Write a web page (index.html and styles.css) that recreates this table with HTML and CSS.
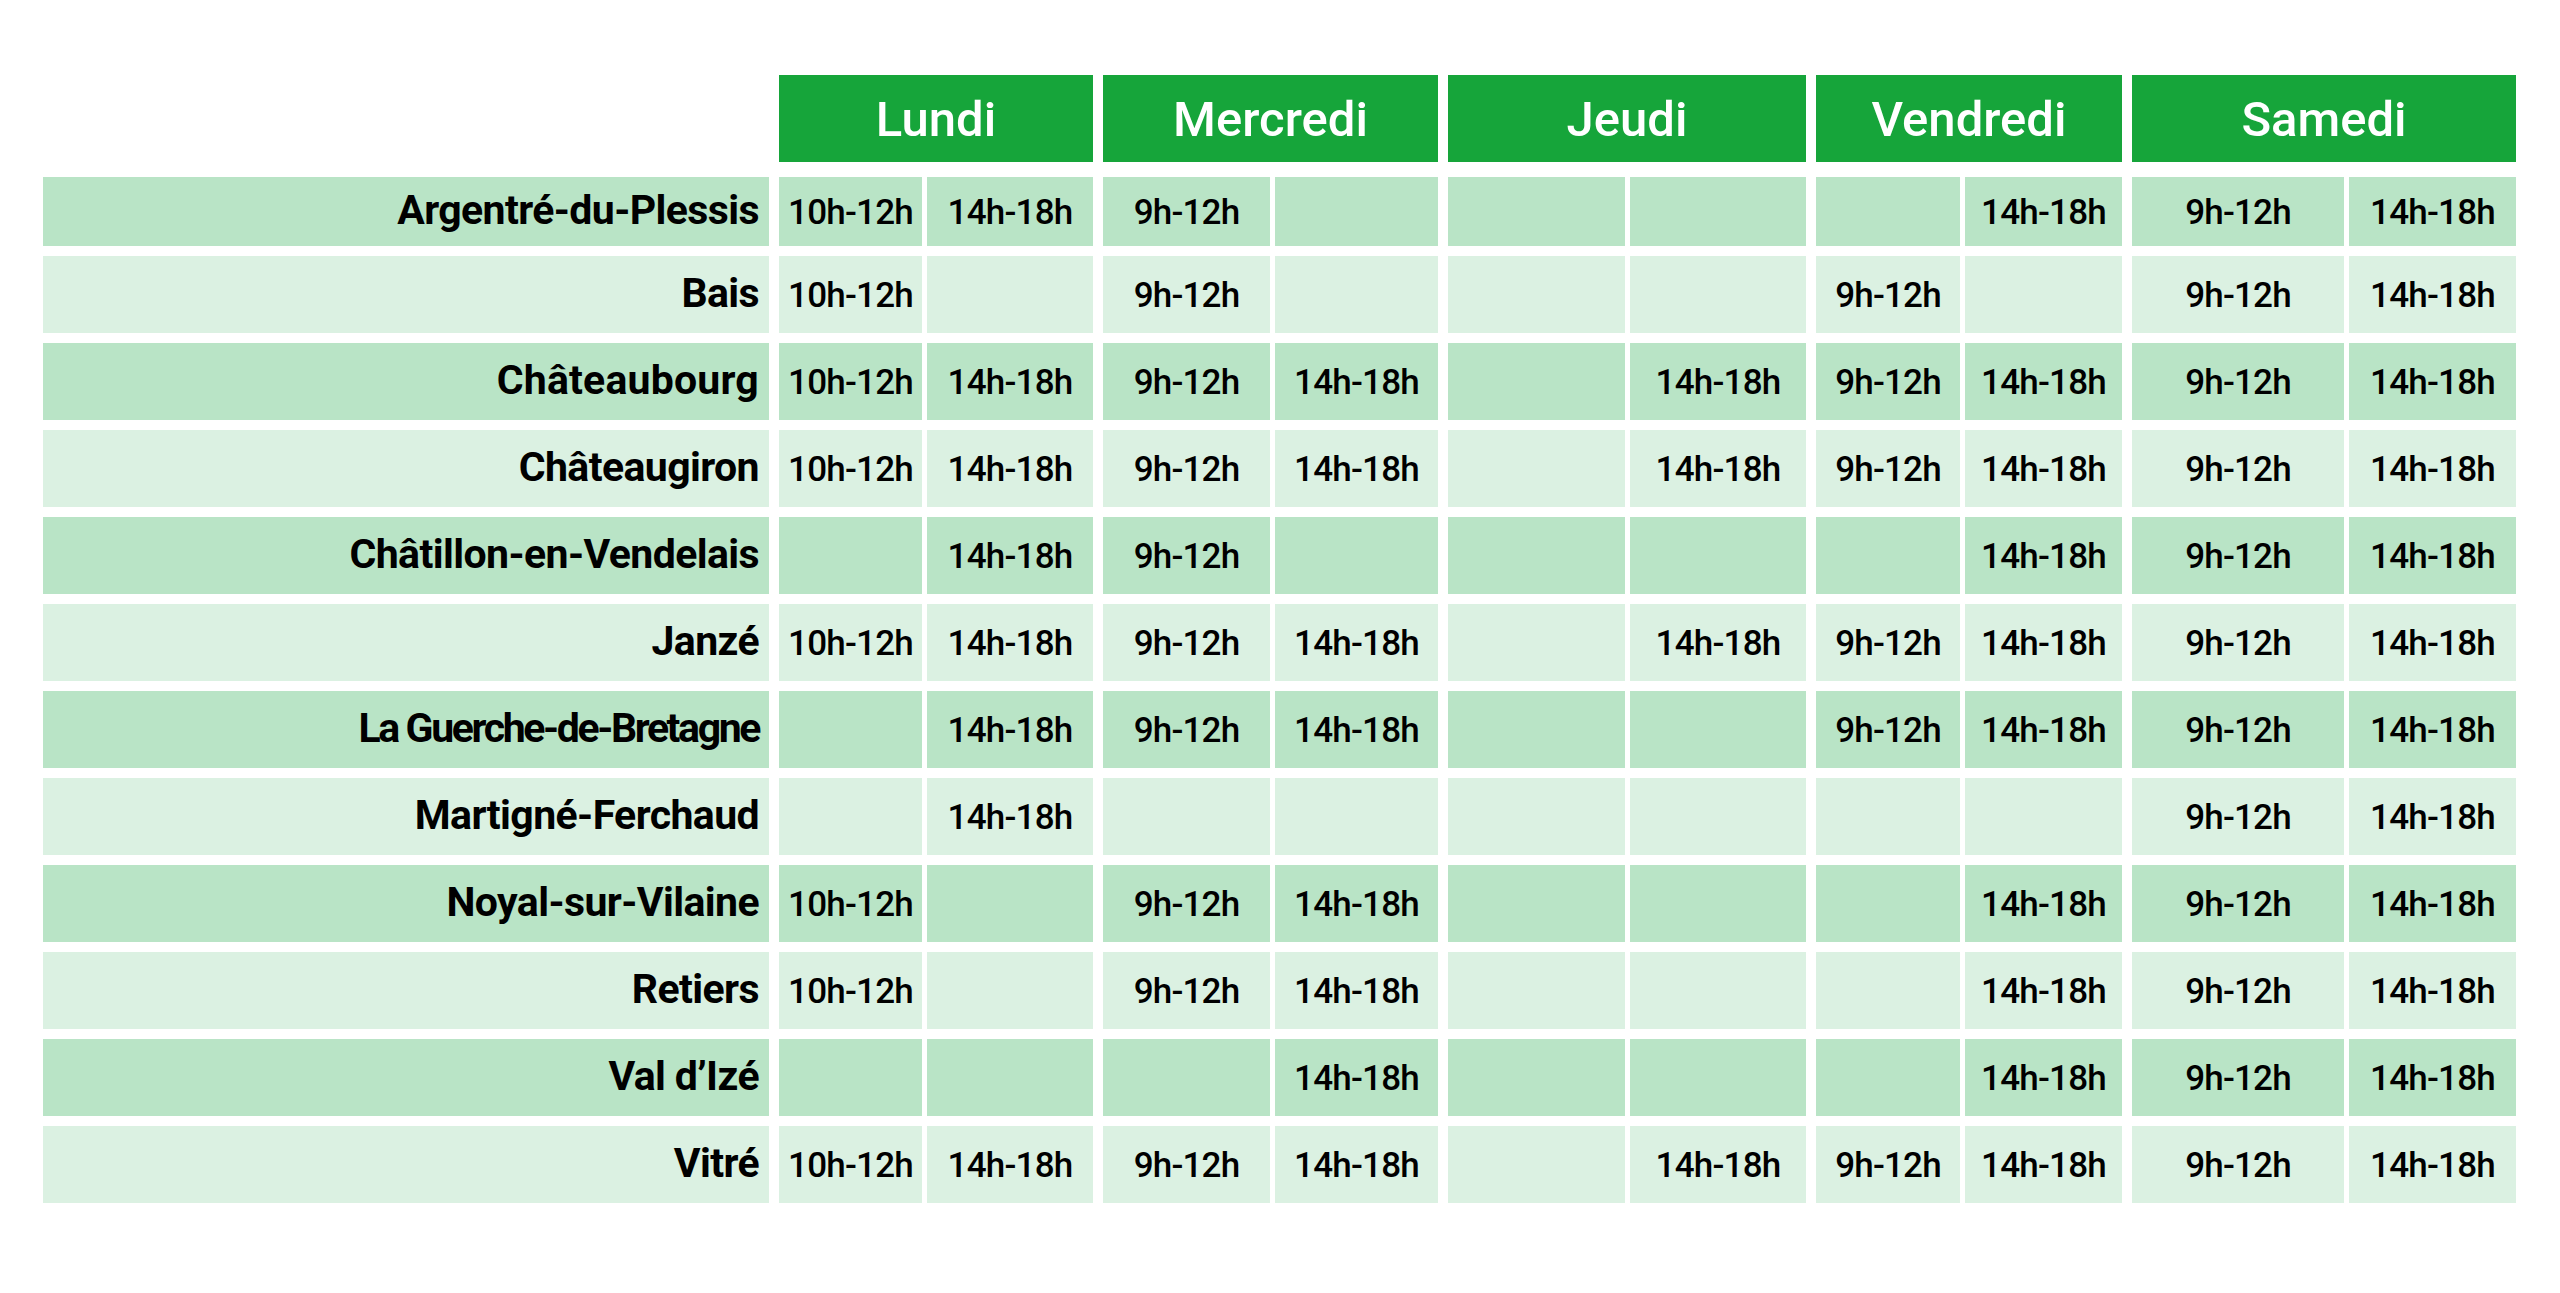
FILE: index.html
```html
<!DOCTYPE html>
<html lang="fr">
<head>
<meta charset="utf-8">
<title>Horaires</title>
<link rel="stylesheet" href="styles.css">
</head>
<body>
<div class="page">
  <div class="table">
    <div class="head-row">
      <div class="name-spacer"></div>
      <div class="day day-lun">Lundi</div>
      <div class="day day-mer">Mercredi</div>
      <div class="day day-jeu">Jeudi</div>
      <div class="day day-ven">Vendredi</div>
      <div class="day day-sam">Samedi</div>
    </div>

    <div class="row dark first">
      <div class="name">Argentré-du-Plessis</div>
      <div class="grp g-lun"><div class="c a">10h-12h</div><div class="c b">14h-18h</div></div>
      <div class="grp g-mer"><div class="c a">9h-12h</div><div class="c b"></div></div>
      <div class="grp g-jeu"><div class="c a"></div><div class="c b"></div></div>
      <div class="grp g-ven"><div class="c a"></div><div class="c b">14h-18h</div></div>
      <div class="grp g-sam"><div class="c a">9h-12h</div><div class="c b">14h-18h</div></div>
    </div>

    <div class="row light">
      <div class="name">Bais</div>
      <div class="grp g-lun"><div class="c a">10h-12h</div><div class="c b"></div></div>
      <div class="grp g-mer"><div class="c a">9h-12h</div><div class="c b"></div></div>
      <div class="grp g-jeu"><div class="c a"></div><div class="c b"></div></div>
      <div class="grp g-ven"><div class="c a">9h-12h</div><div class="c b"></div></div>
      <div class="grp g-sam"><div class="c a">9h-12h</div><div class="c b">14h-18h</div></div>
    </div>

    <div class="row dark">
      <div class="name wide">Châteaubourg</div>
      <div class="grp g-lun"><div class="c a">10h-12h</div><div class="c b">14h-18h</div></div>
      <div class="grp g-mer"><div class="c a">9h-12h</div><div class="c b">14h-18h</div></div>
      <div class="grp g-jeu"><div class="c a"></div><div class="c b">14h-18h</div></div>
      <div class="grp g-ven"><div class="c a">9h-12h</div><div class="c b">14h-18h</div></div>
      <div class="grp g-sam"><div class="c a">9h-12h</div><div class="c b">14h-18h</div></div>
    </div>

    <div class="row light">
      <div class="name">Châteaugiron</div>
      <div class="grp g-lun"><div class="c a">10h-12h</div><div class="c b">14h-18h</div></div>
      <div class="grp g-mer"><div class="c a">9h-12h</div><div class="c b">14h-18h</div></div>
      <div class="grp g-jeu"><div class="c a"></div><div class="c b">14h-18h</div></div>
      <div class="grp g-ven"><div class="c a">9h-12h</div><div class="c b">14h-18h</div></div>
      <div class="grp g-sam"><div class="c a">9h-12h</div><div class="c b">14h-18h</div></div>
    </div>

    <div class="row dark">
      <div class="name">Châtillon-en-Vendelais</div>
      <div class="grp g-lun"><div class="c a"></div><div class="c b">14h-18h</div></div>
      <div class="grp g-mer"><div class="c a">9h-12h</div><div class="c b"></div></div>
      <div class="grp g-jeu"><div class="c a"></div><div class="c b"></div></div>
      <div class="grp g-ven"><div class="c a"></div><div class="c b">14h-18h</div></div>
      <div class="grp g-sam"><div class="c a">9h-12h</div><div class="c b">14h-18h</div></div>
    </div>

    <div class="row light">
      <div class="name">Janzé</div>
      <div class="grp g-lun"><div class="c a">10h-12h</div><div class="c b">14h-18h</div></div>
      <div class="grp g-mer"><div class="c a">9h-12h</div><div class="c b">14h-18h</div></div>
      <div class="grp g-jeu"><div class="c a"></div><div class="c b">14h-18h</div></div>
      <div class="grp g-ven"><div class="c a">9h-12h</div><div class="c b">14h-18h</div></div>
      <div class="grp g-sam"><div class="c a">9h-12h</div><div class="c b">14h-18h</div></div>
    </div>

    <div class="row dark">
      <div class="name tight">La Guerche-de-Bretagne</div>
      <div class="grp g-lun"><div class="c a"></div><div class="c b">14h-18h</div></div>
      <div class="grp g-mer"><div class="c a">9h-12h</div><div class="c b">14h-18h</div></div>
      <div class="grp g-jeu"><div class="c a"></div><div class="c b"></div></div>
      <div class="grp g-ven"><div class="c a">9h-12h</div><div class="c b">14h-18h</div></div>
      <div class="grp g-sam"><div class="c a">9h-12h</div><div class="c b">14h-18h</div></div>
    </div>

    <div class="row light">
      <div class="name">Martigné-Ferchaud</div>
      <div class="grp g-lun"><div class="c a"></div><div class="c b">14h-18h</div></div>
      <div class="grp g-mer"><div class="c a"></div><div class="c b"></div></div>
      <div class="grp g-jeu"><div class="c a"></div><div class="c b"></div></div>
      <div class="grp g-ven"><div class="c a"></div><div class="c b"></div></div>
      <div class="grp g-sam"><div class="c a">9h-12h</div><div class="c b">14h-18h</div></div>
    </div>

    <div class="row dark">
      <div class="name">Noyal-sur-Vilaine</div>
      <div class="grp g-lun"><div class="c a">10h-12h</div><div class="c b"></div></div>
      <div class="grp g-mer"><div class="c a">9h-12h</div><div class="c b">14h-18h</div></div>
      <div class="grp g-jeu"><div class="c a"></div><div class="c b"></div></div>
      <div class="grp g-ven"><div class="c a"></div><div class="c b">14h-18h</div></div>
      <div class="grp g-sam"><div class="c a">9h-12h</div><div class="c b">14h-18h</div></div>
    </div>

    <div class="row light">
      <div class="name">Retiers</div>
      <div class="grp g-lun"><div class="c a">10h-12h</div><div class="c b"></div></div>
      <div class="grp g-mer"><div class="c a">9h-12h</div><div class="c b">14h-18h</div></div>
      <div class="grp g-jeu"><div class="c a"></div><div class="c b"></div></div>
      <div class="grp g-ven"><div class="c a"></div><div class="c b">14h-18h</div></div>
      <div class="grp g-sam"><div class="c a">9h-12h</div><div class="c b">14h-18h</div></div>
    </div>

    <div class="row dark">
      <div class="name">Val d’Izé</div>
      <div class="grp g-lun"><div class="c a"></div><div class="c b"></div></div>
      <div class="grp g-mer"><div class="c a"></div><div class="c b">14h-18h</div></div>
      <div class="grp g-jeu"><div class="c a"></div><div class="c b"></div></div>
      <div class="grp g-ven"><div class="c a"></div><div class="c b">14h-18h</div></div>
      <div class="grp g-sam"><div class="c a">9h-12h</div><div class="c b">14h-18h</div></div>
    </div>

    <div class="row light">
      <div class="name">Vitré</div>
      <div class="grp g-lun"><div class="c a">10h-12h</div><div class="c b">14h-18h</div></div>
      <div class="grp g-mer"><div class="c a">9h-12h</div><div class="c b">14h-18h</div></div>
      <div class="grp g-jeu"><div class="c a"></div><div class="c b">14h-18h</div></div>
      <div class="grp g-ven"><div class="c a">9h-12h</div><div class="c b">14h-18h</div></div>
      <div class="grp g-sam"><div class="c a">9h-12h</div><div class="c b">14h-18h</div></div>
    </div>
  </div>
</div>
</body>
</html>
```

FILE: styles.css
```css
html, body {
  margin: 0;
  padding: 0;
  background: #ffffff;
}

body {
  font-family: Roboto, "Liberation Sans", Arial, sans-serif;
  color: #000;
}

.page {
  padding: 75px 0 0 43px;
}

.table {
  display: flex;
  flex-direction: column;
  gap: 10px;
}

.head-row,
.row {
  display: flex;
  gap: 10px;
}

.head-row {
  height: 87px;
  margin-bottom: 5px;
}

.name-spacer {
  width: 726px;
  flex: none;
}

.day {
  flex: none;
  background: #16a53a;
  color: #fff;
  font-size: 49px;
  font-weight: 500;
  display: flex;
  align-items: center;
  justify-content: center;
  padding-top: 2px;
  box-sizing: border-box;
}

.day-lun, .g-lun { width: 314px; }
.day-mer, .g-mer { width: 335px; }
.day-jeu, .g-jeu { width: 358px; }
.day-ven, .g-ven { width: 306px; }
.day-sam, .g-sam { width: 384px; }

.row {
  height: 77px;
}

.row.first {
  height: 69px;
}

.name {
  width: 726px;
  flex: none;
  box-sizing: border-box;
  padding: 0 10px 4px 0;
  display: flex;
  align-items: center;
  justify-content: flex-end;
  font-size: 41px;
  font-weight: 700;
  letter-spacing: -0.6px;
}

.name.tight {
  letter-spacing: -2.4px;
}

.name.wide {
  letter-spacing: 0.2px;
}

.grp {
  flex: none;
  display: flex;
  gap: 5px;
}

.c {
  display: flex;
  align-items: center;
  justify-content: center;
  font-size: 35px;
  font-weight: 500;
  letter-spacing: -0.8px;
  padding-top: 1px;
}

.g-lun .a { width: 143px; }
.g-lun .b { width: 166px; }
.g-mer .a { width: 167px; }
.g-mer .b { width: 163px; }
.g-jeu .a { width: 177px; }
.g-jeu .b { width: 176px; }
.g-ven .a { width: 144px; }
.g-ven .b { width: 157px; }
.g-sam .a { width: 212px; }
.g-sam .b { width: 167px; }

.dark .name,
.dark .c {
  background: #b9e4c6;
}

.light .name,
.light .c {
  background: #dbf1e2;
}
```
